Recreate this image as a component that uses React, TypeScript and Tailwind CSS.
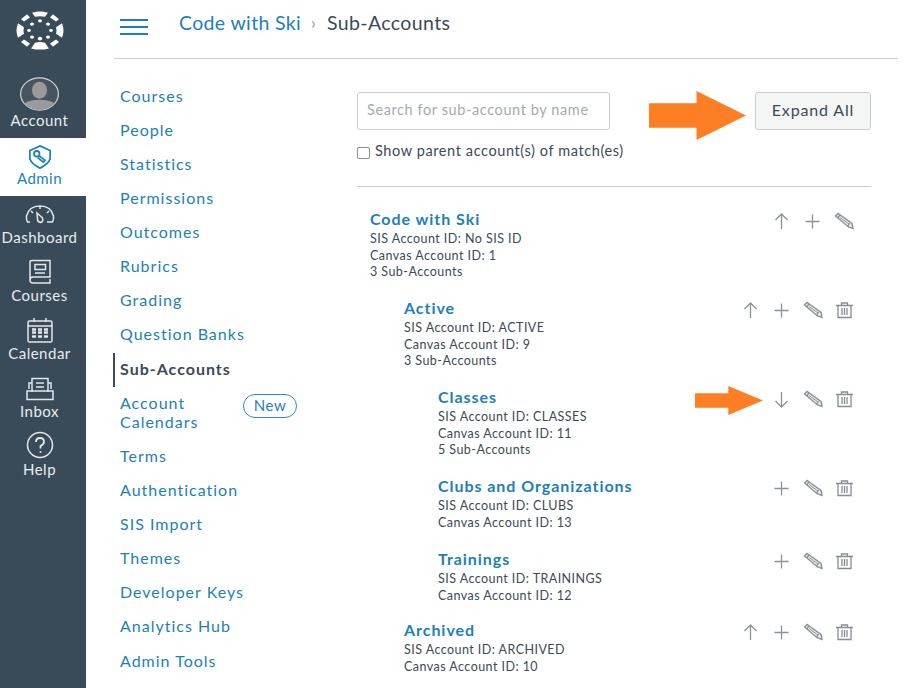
const navItems = [
  { name: "Dashboard", icon: "dash" },
  { name: "Courses", icon: "book" },
  { name: "Calendar", icon: "cal" },
  { name: "Inbox", icon: "inbox" },
  { name: "Help", icon: "help" },
];

const menuBefore = ["Courses", "People", "Statistics", "Permissions", "Outcomes", "Rubrics", "Grading", "Question Banks"];
const menuAfter = ["Terms", "Authentication", "SIS Import", "Themes", "Developer Keys", "Analytics Hub", "Admin Tools"];

const accounts = [
  { name: "Code with Ski", lines: ["SIS Account ID: No SIS ID", "Canvas Account ID: 1", "3 Sub-Accounts"], indent: "pl-[13px]", h: "h-[89px]", icons: ["up", "plus", "edit"] },
  { name: "Active", lines: ["SIS Account ID: ACTIVE", "Canvas Account ID: 9", "3 Sub-Accounts"], indent: "pl-[47px]", h: "h-[89px]", icons: ["up", "plus", "edit", "trash"] },
  { name: "Classes", lines: ["SIS Account ID: CLASSES", "Canvas Account ID: 11", "5 Sub-Accounts"], indent: "pl-[81px]", h: "h-[89px]", icons: ["down", "edit", "trash"] },
  { name: "Clubs and Organizations", lines: ["SIS Account ID: CLUBS", "Canvas Account ID: 13"], indent: "pl-[81px]", h: "h-[73px]", icons: ["plus", "edit", "trash"] },
  { name: "Trainings", lines: ["SIS Account ID: TRAININGS", "Canvas Account ID: 12"], indent: "pl-[81px]", h: "h-[71px]", icons: ["plus", "edit", "trash"] },
  { name: "Archived", lines: ["SIS Account ID: ARCHIVED", "Canvas Account ID: 10"], indent: "pl-[47px]", h: "h-[60px]", icons: ["up", "plus", "edit", "trash"] },
];

const CanvasLogo = () => (
  <svg viewBox="0 0 48 48" preserveAspectRatio="none" className="w-[48px] h-[39px]" fill="#fff">
    <path d="M16 2 Q24 -1 32 2 L29 7 Q24 6 19 7 Z" />
    <path d="M15 46 Q24 49 33 46 L29 39 Q24 37.500 19 39 Z" />
    <path d="M2 15 Q-1 24 2 33 L8 28 Q7 24 8 20 Z" />
    <path d="M46 15 Q49 24 46 33 L40 28 Q41 24 40 20 Z" />
    <path d="M5 10 L11 4 L14 8 L8 13 Z" />
    <path d="M43 10 L37 4 L34 8 L40 13 Z" />
    <path d="M5 38 L11 44 L14 40 L8 35 Z" />
    <path d="M43 38 L37 44 L34 40 L40 35 Z" />
    <circle cx="24" cy="12" r="2" />
    <circle cx="24" cy="34" r="2.200" />
    <circle cx="13" cy="24" r="1.800" />
    <circle cx="35" cy="24" r="1.800" />
    <circle cx="16" cy="16" r="2" />
    <circle cx="32" cy="16" r="2" />
    <circle cx="16" cy="32" r="2" />
    <circle cx="32" cy="32" r="2" />
  </svg>
);

const AvatarIcon = () => (
  <svg viewBox="0 0 42 36" className="w-[41px] h-[34px]">
    <ellipse cx="21" cy="18" rx="20" ry="17" fill="#46555f" stroke="#cfd3d5" strokeWidth="1.300" />
    <ellipse cx="21" cy="14" rx="8" ry="9" fill="#9a9a9a" />
    <path d="M5 28 Q10 24 21 24 Q32 24 37 28 Q31 34.500 21 34.500 Q11 34.500 5 28 Z" fill="#9a9a9a" />
  </svg>
);

const AdminIcon = () => (
  <svg viewBox="0 0 26 26" className="w-[24px] h-[24px]" fill="none" stroke="#1c7fc0" strokeWidth="1.900">
    <path d="M13 1 L24 6 L24 15 Q22 21 13 25 Q4 21 2 15 L2 6 Z" />
    <circle cx="9.500" cy="9.500" r="3" />
    <path d="M12 11.500 L18.500 16.500 L16.500 18.500 L10.500 13.500" />
  </svg>
);

const NavIcon = ({ icon }: { icon: string }) => {
  if (icon === "dash") {
    return (
      <svg viewBox="0 0 30 23" className="w-[30px] h-[23px]" fill="none" stroke="#e4e7e9" strokeWidth="1.500">
        <path d="M5 18 H2.500 Q1 15 1.500 12 Q4 2 15 2 Q26 2 28.500 12 Q29 15 27.500 18 H22" />
        <path d="M15 2 V5 M6 7 L8 9 M24 7 L22 9" />
        <path d="M12 9 L17.500 14 Q18.500 18 15.500 18.500 Q12.500 18 12.500 15 Z" />
      </svg>
    );
  }
  if (icon === "book") {
    return (
      <svg viewBox="0 0 24 26" className="w-[24px] h-[26px]" fill="none" stroke="#e4e7e9" strokeWidth="1.500">
        <path d="M2 20 V3 Q2 1.500 4 1.500 H22 V18 H5 Q2 18 2 21 Q2 24 5 24 H22 V20" />
        <rect x="7" y="5.500" width="10.500" height="5" />
        <path d="M7 14 H17" />
      </svg>
    );
  }
  if (icon === "cal") {
    return (
      <svg viewBox="0 0 26 26" className="w-[26px] h-[26px]" fill="none" stroke="#e4e7e9" strokeWidth="1.500">
        <rect x="1" y="4" width="24" height="21" rx="1.500" />
        <path d="M1 9 H25 M7 1 V5 M19 1 V5" />
        <path d="M5 12.500 H9 M11 12.500 H15 M17 12.500 H21 M5 15.500 H9 M11 15.500 H15 M17 15.500 H21 M5 19.500 H9 M11 19.500 H15 M17 19.500 H21" strokeWidth="2.500" />
      </svg>
    );
  }
  if (icon === "inbox") {
    return (
      <svg viewBox="0 0 30 24" className="w-[30px] h-[24px]" fill="none" stroke="#e4e7e9" strokeWidth="1.500">
        <path d="M7 15 V1.500 H23 V15" />
        <path d="M11 6 H19 M11 10 H19" />
        <path d="M7 6 H4 V12 M23 6 H26 V12" />
        <path d="M2 14 H28 V22.500 H2 Z" />
      </svg>
    );
  }
  return (
    <svg viewBox="0 0 28 28" className="w-[28px] h-[28px]" fill="none" stroke="#e4e7e9" strokeWidth="1.500">
      <circle cx="14" cy="14" r="12.500" />
      <path d="M10 11 Q10 7 14 7 Q18 7 18 11 Q18 13 14.500 15 V17.500" strokeWidth="1.800" />
      <circle cx="14.500" cy="21" r="1" fill="#e4e7e9" stroke="none" />
    </svg>
  );
};

const RowIcon = ({ kind }: { kind: string }) => {
  if (kind === "edit") {
    return (
      <svg viewBox="0 0 20 18" className="w-[20px] h-[18px]" fill="none" stroke="#8a9299" strokeWidth="1.400">
        <path d="M1.500 4 L4 1.500 L18 11.500 L19 16.500 L14.500 15 Z" fill="#eceeef" />
        <path d="M3.500 6 L6 3 M15.500 11 L13.500 14.500" />
        <path d="M6 5.500 L15 12" strokeWidth="1" />
      </svg>
    );
  }
  if (kind === "trash") {
    return (
      <svg viewBox="0 0 19 18" className="w-[19px] h-[18px]" fill="none" stroke="#858d93" strokeWidth="1.300">
        <path d="M1 4.500 H18 M6.500 4.500 V2 H12.500 V4.500" />
        <path d="M3 4.500 V16.500 H16 V4.500" />
        <path d="M7 7 V14 M9.500 7 V14 M12 7 V14" />
      </svg>
    );
  }
  const paths: Record<string, string> = {
    up: "M9.500 2 V17 M3.500 8 L9.500 2 L15.500 8",
    down: "M9.500 2 V17 M3.500 11 L9.500 17 L15.500 11",
    plus: "M9.500 2.500 V16.500 M2.500 9.500 H16.500",
  };
  return (
    <svg viewBox="0 0 19 19" className="w-[19px] h-[19px]" fill="none" stroke="#8a939a" strokeWidth="1.300">
      <path d={paths[kind]} />
    </svg>
  );
};

const OrangeArrow = ({ big }: { big?: boolean }) => (
  <svg viewBox="0 0 100 50" preserveAspectRatio="none" className={big ? "w-[97px] h-[49px]" : "w-[68px] h-[29px]"} fill="#fd7e23">
    <path d="M0 12.500 H49 V0 L100 25 L49 50 V37.500 H0 Z" />
  </svg>
);

const MenuLink = ({ name, active }: { name: string; active?: boolean }) => (
  <a className={active
    ? "block h-[34.150px] leading-[32px] pl-[5px] -ml-[1px] border-l-2 border-[#394b58] text-[16px] tracking-[1px] font-bold text-[#394b58]"
    : "block h-[34.150px] leading-[32px] pl-[6px] text-[16px] tracking-[1px] text-[#1d7fba]"}>
    {name}
  </a>
);

export default function App() {
  return (
    <div className="flex w-[919px] h-[688px] overflow-hidden bg-white font-['Lato',sans-serif]">
      <aside className="w-[86px] shrink-0 bg-[#394b58] flex flex-col text-[15px] tracking-[0.500px] text-[#e8ebed]">
        <div className="h-[72px] pt-[11px] pr-[7px] flex justify-center"><CanvasLogo /></div>
        <div className="h-[66px] flex flex-col items-center pt-[5px] pr-[7px] leading-[18px]">
          <AvatarIcon />
          <span>Account</span>
        </div>
        <div className="h-[58px] bg-white flex flex-col items-center pt-[7px] pr-[7px] text-[#1c7fc0] leading-[18px]">
          <AdminIcon />
          <span>Admin</span>
        </div>
        {navItems.map((item) => (
          <div key={item.name} className="h-[58px] flex flex-col items-center justify-end pb-[8px] pr-[7px] leading-[18px]">
            <NavIcon icon={item.icon} />
            <span className="mt-[1px]">{item.name}</span>
          </div>
        ))}
      </aside>

      <main className="flex-1 min-w-0 pl-[28px] pr-[21px]">
        <header className="h-[59px] border-b border-[#c7cdd1] flex items-center pb-[12px] pl-[6px]">
          <div className="flex flex-col gap-[5px] w-[28px] mt-[7px]">
            <span className="h-[2px] bg-[#1d7fba]" />
            <span className="h-[2px] bg-[#1d7fba]" />
            <span className="h-[2px] bg-[#1d7fba]" />
          </div>
          <span className="ml-[31px] text-[19.500px] tracking-[0.350px] text-[#1d7fba]">Code with Ski</span>
          <span className="ml-[10px] mr-[11px] text-[17px] text-[#8d979e]">›</span>
          <span className="text-[19.500px] tracking-[0.400px] text-[#394b58]">Sub-Accounts</span>
        </header>

        <div className="flex">
          <nav className="w-[243px] shrink-0 pt-[20.500px]">
            {menuBefore.map((m) => <MenuLink key={m} name={m} />)}
            <MenuLink name="Sub-Accounts" active />
            <div className="flex h-[53px] pl-[6px] text-[16px] tracking-[1px] leading-[19px] text-[#1d7fba]">
              <span className="w-[123px] pt-[6px]">Account<br />Calendars</span>
              <span className="h-[24px] w-[54px] rounded-full border-[1.500px] border-[#2d8bc4] text-center text-[15px] tracking-[0.600px] leading-[20px] mt-[7px]">New</span>
            </div>
            {menuAfter.map((m) => <MenuLink key={m} name={m} />)}
          </nav>

          <section className="flex-1 min-w-0 pr-[27px]">
            <div className="relative h-[128px] border-b border-[#c7cdd1] pt-[33px]">
              <div className="flex items-start justify-between">
                <div className="w-[253px] h-[38px] border border-[#c7cdd1] rounded-[3px] px-[9px] leading-[33px] text-[14.500px] tracking-[0.600px] text-[#a3abb1]">
                  Search for sub-account by name
                </div>
                <button className="w-[116px] h-[38px] pb-[2px] bg-[#f4f5f5] border border-[#c7cdd1] rounded-[3px] text-[16px] tracking-[0.850px] text-[#394b58]">
                  Expand All
                </button>
              </div>
              <label className="flex items-center mt-[10px] text-[14.500px] tracking-[0.600px] text-[#394b58]">
                <span className="w-[13px] h-[12px] mt-[5px] border border-[#8a9197] rounded-[2px] mr-[5px]" />
                Show parent account(s) of match(es)
              </label>
              <div className="absolute left-[292px] top-[32px]"><OrangeArrow big /></div>
            </div>

            <div className="pt-[22px]">
              {accounts.map((a) => (
                <div key={a.name} className={`relative flex justify-between ${a.h} ${a.indent}`}>
                  <div>
                    <div className="text-[16px] tracking-[0.950px] leading-[19px] font-bold text-[#1d7fba] mb-[3px]">{a.name}</div>
                    {a.lines.map((l) => (
                      <div key={l} className="text-[12.500px] tracking-[0.450px] leading-[16.500px] text-[#394b58]">{l}</div>
                    ))}
                  </div>
                  <div className="flex justify-end items-start gap-[12px] pr-[17px] pt-[3px]">
                    {a.icons.map((k, i) => <RowIcon key={i} kind={k} />)}
                  </div>
                  {a.name === "Classes" && (
                    <div className="absolute left-[338px] -top-[1px]"><OrangeArrow /></div>
                  )}
                </div>
              ))}
            </div>
          </section>
        </div>
      </main>
    </div>
  );
}
